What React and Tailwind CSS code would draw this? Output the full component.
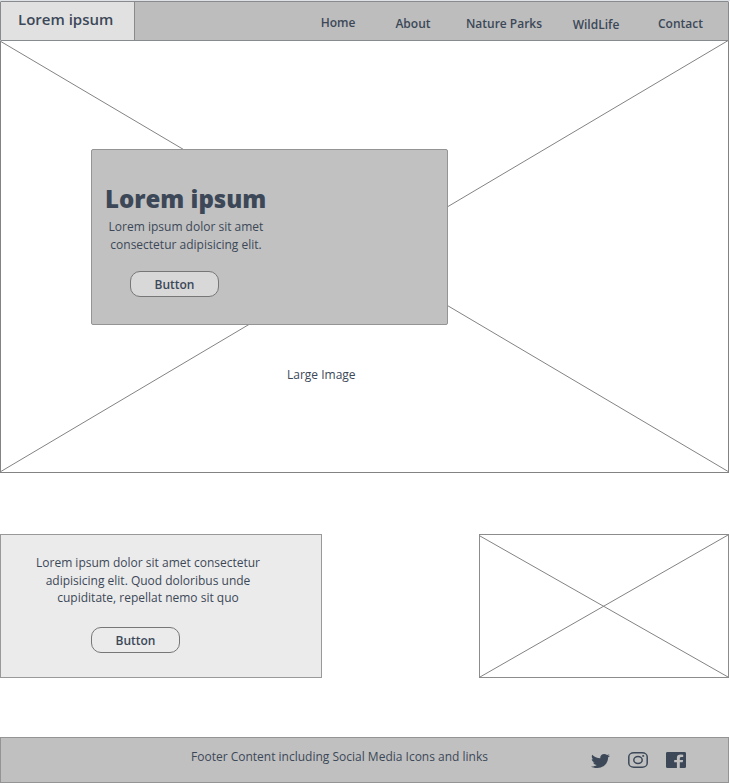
import React from "react";

const NAV = [
  { label: "Home", cls: "w-[76px] pt-[12px]" },
  { label: "About", cls: "w-[74px] pt-[13px]" },
  { label: "Nature Parks", cls: "w-[108px] pt-[13px]" },
  { label: "WildLife", cls: "w-[76px] pt-[14px]" },
  { label: "Contact", cls: "w-[93px] pt-[13px]" },
];

function Cross({ width, height, className }) {
  return (
    <svg className={`absolute ${className}`} width={width} height={height} stroke="#838383" strokeWidth="1" fill="none">
      <path d={`M0 1 ${width} ${height}M0 ${height} ${width} 0`} />
    </svg>
  );
}

function Button({ className }) {
  return (
    <button className={`block h-[26px] w-[89px] rounded-[10px] border border-[#777] text-center text-[12px] leading-[25px] font-semibold ${className}`}>
      Button
    </button>
  );
}

export default function App() {
  return (
    <div className="h-[784px] w-[730px] overflow-hidden bg-white font-['Open_Sans',sans-serif] text-[12px] text-[#3c4858]">
      <header className="border-t border-[#dfe3e7]">
        <div className="flex h-[40px] w-[729px] rounded-[1px] border border-[#888b8e] bg-[#bdbdbd] font-semibold">
          <div className="w-[134px] border-r border-[#8a8a8a] bg-[#e1e1e1] pl-[17px] text-[15px] leading-[34px]">Lorem ipsum</div>
          <nav className="ml-[165px] flex">
            {NAV.map((n) => (
              <a key={n.label} className={`text-center leading-[18px] whitespace-nowrap ${n.cls}`}>{n.label}</a>
            ))}
          </nav>
        </div>
      </header>

      <section className="relative h-[432px] w-[729px] border border-t-0 border-[#838383] pt-[108px]">
        <Cross width={729} height={432} className="-top-px -left-px" />
        <div className="relative ml-[90px] h-[176px] w-[357px] rounded-[2px] border border-[#949494] bg-[#c1c1c1]">
          <h1 className="pt-[32px] pl-[13px] text-[24px] leading-[34px] font-extrabold">Lorem ipsum</h1>
          <p className="w-[188px] pt-[2px] text-center leading-[18px]">
            Lorem ipsum dolor sit amet<br />consectetur adipisicing elit.
          </p>
          <Button className="mt-[17px] ml-[38px] bg-[#d8d8d8]" />
        </div>
        <p className="relative mt-[41px] ml-[286px] leading-[18px]">Large Image</p>
      </section>

      <section className="mt-[61px] flex h-[144px] w-[729px] justify-between">
        <div className="w-[322px] border border-[#999] bg-[#ebebeb]">
          <p className="w-[294px] pt-[19px] text-center leading-[17.6px]">
            Lorem ipsum dolor sit amet consectetur<br />adipisicing elit. Quod doloribus unde<br />cupiditate, repellat nemo sit quo
          </p>
          <Button className="mt-[20px] ml-[90px]" />
        </div>
        <div className="relative w-[250px] border border-[#8c8c8c]">
          <Cross width={248} height={142} className="top-0 left-0" />
        </div>
      </section>

      <footer className="mt-[59px] flex h-[46px] w-[729px] border border-[#949494] bg-[#c0c0c0]">
        <p className="w-[590px] pt-[10px] pl-[190px] leading-[18px] whitespace-nowrap">Footer Content including Social Media Icons and links</p>
        <div className="flex gap-[18px] pt-[14px]">
          <svg className="mt-[2px] mr-px" width="19" height="14" viewBox="0 48 512 416" preserveAspectRatio="none" fill="currentColor">
            <path d="M459 152c.3 4.500.3 9.100.3 13.600 0 138.700-105.600 298.600-298.600 298.600-59.500 0-114.700-17.200-161.100-47.100 8.400 1 16.600 1.300 25.300 1.300 49.100 0 94.200-16.600 130.300-44.800-46.100-1-84.800-31.200-98.100-72.800 6.500 1 13 1.600 19.800 1.600 9.400 0 18.800-1.300 27.600-3.600-48.100-9.700-84.100-52-84.100-103v-1.300c14 7.800 30.200 12.700 47.400 13.300-28.300-18.800-46.800-51-46.800-87.400 0-19.500 5.200-37.400 14.300-53 51.700 63.700 129.300 105.300 216.400 109.800-1.600-7.800-2.600-15.900-2.600-24 0-57.800 46.800-104.900 104.900-104.900 30.200 0 57.500 12.700 76.700 33.100 23.700-4.500 46.500-13.300 66.600-25.300-7.800 24.400-24.400 44.800-46.100 57.800 21.100-2.300 41.600-8.100 60.400-16.200-14.300 20.800-32.200 39.300-52.600 54.300z" />
          </svg>
          <svg className="-ml-px" width="20" height="16" viewBox="0 0 20 16" fill="none" stroke="currentColor" strokeWidth="1.500">
            <rect x=".8" y=".8" width="18.400" height="14.400" rx="5" ry="4" />
            <ellipse cx="10" cy="8" rx="4.200" ry="3.500" />
            <ellipse cx="15.200" cy="3.900" rx="1.100" ry=".9" fill="currentColor" stroke="none" />
          </svg>
          <svg width="20" height="16" viewBox="0 0 20 16" fill="currentColor">
            <path d="M1.500 0h17Q20 0 20 1.300v13.400q0 1.300-1.500 1.300h-4.700v-5.700h2.900l.4-2.300h-3.300V6.300q0-1.300 1.700-1.300h1.700V2.800q-1-.2-2.400-.2-3.900 0-3.900 3.300V8H8.200v2.300h2.700V16H1.500Q0 16 0 14.700V1.300Q0 0 1.500 0z" />
          </svg>
        </div>
      </footer>
    </div>
  );
}
